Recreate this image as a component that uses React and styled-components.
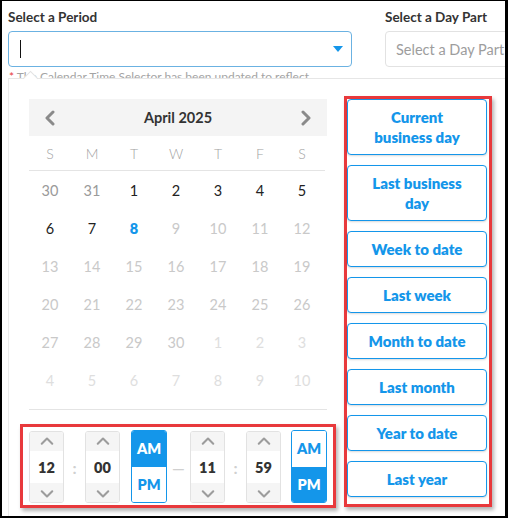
import React from 'react'
import styled, { createGlobalStyle } from 'styled-components'

const GlobalStyle = createGlobalStyle`
  html, body {
    margin: 0;
    padding: 0;
    background: #fff;
  }
  body {
    font-family: 'Lato', 'Open Sans', sans-serif;
  }
`

const BLUE = '#1496ea'
const RED = '#e8393c'

const weekdays = ['S', 'M', 'T', 'W', 'T', 'F', 'S']

const days = [
  [['30', 'prev'], ['31', 'prev'], ['1', 'on'], ['2', 'on'], ['3', 'on'], ['4', 'on'], ['5', 'on']],
  [['6', 'on'], ['7', 'on'], ['8', 'today'], ['9', 'off'], ['10', 'off'], ['11', 'off'], ['12', 'off']],
  [['13', 'off'], ['14', 'off'], ['15', 'off'], ['16', 'off'], ['17', 'off'], ['18', 'off'], ['19', 'off']],
  [['20', 'off'], ['21', 'off'], ['22', 'off'], ['23', 'off'], ['24', 'off'], ['25', 'off'], ['26', 'off']],
  [['27', 'off'], ['28', 'off'], ['29', 'off'], ['30', 'off'], ['1', 'next'], ['2', 'next'], ['3', 'next']],
  [['4', 'next'], ['5', 'next'], ['6', 'next'], ['7', 'next'], ['8', 'next'], ['9', 'next'], ['10', 'next']],
]

const dayColors = {
  prev: '#9a9a9a',
  on: '#222',
  today: BLUE,
  off: '#c9c9c9',
  next: '#dedede',
}

// line breaks follow the narrow button width of the original
const presets = [
  'Current\nbusiness day',
  'Last business\nday',
  'Week to date',
  'Last week',
  'Month to date',
  'Last month',
  'Year to date',
  'Last year',
]

const Chevron = ({ dir = 'left', size = 16, color = '#8a8a8a', width = 3 }) => {
  const paths = {
    left: 'M10 2 L4 8 L10 14',
    right: 'M6 2 L12 8 L6 14',
    up: 'M2 10 L8 4 L14 10',
    down: 'M2 6 L8 12 L14 6',
  }
  return (
    <svg width={size} height={size} viewBox="0 0 16 16" fill="none">
      <path d={paths[dir]} stroke={color} strokeWidth={width} strokeLinecap="round" strokeLinejoin="round" />
    </svg>
  )
}

const App = () => {
  return (
    <>
      <GlobalStyle />
      <Frame>
        <TopRow>
          <Field>
            <Label>Select a Period</Label>
            <PeriodInput>
              <Cursor />
              <svg width="10" height="6" viewBox="0 0 10 6">
                <path d="M0 0 L10 0 L5 6 Z" fill={BLUE} />
              </svg>
            </PeriodInput>
          </Field>
          <Field>
            <Label>Select a Day Part</Label>
            <DayPartInput>Select a Day Part</DayPartInput>
          </Field>
        </TopRow>
        <Hint>
          <Star>*</Star> The Calendar Time Selector has been updated to reflect
        </Hint>

        <Popup>
          <Notch />
          <CalendarCol>
            <MonthBar>
              <NavBtn><Chevron dir="left" /></NavBtn>
              <MonthTitle>April 2025</MonthTitle>
              <NavBtn><Chevron dir="right" /></NavBtn>
            </MonthBar>
            <WeekRow>
              {weekdays.map((d, i) => (
                <WeekDay key={i}>{d}</WeekDay>
              ))}
            </WeekRow>
            <DayGrid>
              {days.flat().map(([n, kind], i) => (
                <Day key={i} $kind={kind}>{n}</Day>
              ))}
            </DayGrid>
            <Divider />
            <TimeBox>
              <Spinner value="12" />
              <Sep $w={21}>:</Sep>
              <Spinner value="00" />
              <Gap $w={11} />
              <Meridiem am />
              <Sep $w={23}>—</Sep>
              <Spinner value="11" />
              <Sep $w={21}>:</Sep>
              <Spinner value="59" />
              <Gap $w={10} />
              <Meridiem />
            </TimeBox>
          </CalendarCol>

          <PresetBox>
            {presets.map((p) => (
              <PresetButton key={p}>{p}</PresetButton>
            ))}
          </PresetBox>
        </Popup>
      </Frame>
    </>
  )
}

const Spinner = ({ value }) => (
  <SpinnerWrap>
    <SpinArrow><Chevron dir="up" size={14} color="#9c9c9c" width={2.4} /></SpinArrow>
    <SpinValue>{value}</SpinValue>
    <SpinArrow><Chevron dir="down" size={14} color="#9c9c9c" width={2.4} /></SpinArrow>
  </SpinnerWrap>
)

const Meridiem = ({ am }) => (
  <MeridiemWrap>
    <MeridiemHalf $active={am}>AM</MeridiemHalf>
    <MeridiemHalf $active={!am}>PM</MeridiemHalf>
  </MeridiemWrap>
)

export default App

const Frame = styled.div`
  position: relative;
  box-sizing: border-box;
  width: 508px;
  height: 518px;
  overflow: hidden;
  border-style: solid;
  border-color: #000;
  border-width: 1px 3px 2px 2px;
  padding: 7px 0 0 6px;
  background: #fff;
`

const TopRow = styled.div`
  display: flex;
  gap: 33px;
  width: 700px;
`

const Field = styled.div`
  display: flex;
  flex-direction: column;
`

const Label = styled.div`
  font-size: 13.5px;
  font-weight: 700;
  color: #333;
  line-height: 18px;
  height: 18px;
  margin-bottom: 5px;
`

const PeriodInput = styled.div`
  box-sizing: border-box;
  width: 344px;
  height: 36px;
  border: 1px solid #6bb2e2;
  border-radius: 4px;
  display: flex;
  align-items: center;
  justify-content: space-between;
  padding: 0 8px 0 11px;
`

const Cursor = styled.span`
  width: 1px;
  height: 18px;
  background: #111;
`

const DayPartInput = styled.div`
  box-sizing: border-box;
  width: 200px;
  height: 36px;
  border: 1px solid #e2e2e2;
  border-radius: 4px;
  display: flex;
  align-items: center;
  padding-left: 10px;
  font-size: 14.5px;
  color: #9d9d9d;
`

const Hint = styled.div`
  margin-top: 3px;
  font-size: 12px;
  line-height: 14px;
  color: #a4a4a4;
  padding-left: 1px;
`

const Star = styled.span`
  color: ${RED};
`

const Popup = styled.div`
  position: absolute;
  top: 77px;
  left: 6px;
  right: 0;
  bottom: 0;
  box-sizing: border-box;
  background: #fff;
  border-top: 1px solid #e6e6e6;
  border-left: 1px solid #ececec;
  display: flex;
  align-items: flex-start;
  gap: 17px;
  padding: 20px 0 0 20px;
`

const Notch = styled.div`
  position: absolute;
  top: -6px;
  left: 16px;
  width: 10px;
  height: 10px;
  background: #fff;
  border-top: 1px solid #e2e2e2;
  border-left: 1px solid #e2e2e2;
  transform: rotate(45deg);
`

const CalendarCol = styled.div`
  width: 298px;
  display: flex;
  flex-direction: column;
`

const MonthBar = styled.div`
  height: 37px;
  background: #f4f4f4;
  display: flex;
  align-items: center;
  justify-content: space-between;
  padding: 0 14px;
`

const NavBtn = styled.span`
  display: flex;
  align-items: center;
`

const MonthTitle = styled.div`
  font-size: 14.5px;
  font-weight: 700;
  color: #333;
`

const WeekRow = styled.div`
  display: grid;
  grid-template-columns: repeat(7, 42px);
  height: 34px;
  align-items: center;
  border-bottom: 1px solid #e4e4e4;
  margin-right: 2px;
`

const WeekDay = styled.div`
  text-align: center;
  font-size: 14px;
  color: #a2a2a2;
  font-weight: 300;
`

const DayGrid = styled.div`
  display: grid;
  grid-template-columns: repeat(7, 42px);
  grid-auto-rows: 38px;
  align-items: center;
`

const Day = styled.div`
  text-align: center;
  font-size: 14.5px;
  font-weight: ${(p) => (p.$kind === 'today' ? 800 : 400)};
  color: ${(p) => dayColors[p.$kind]};
`

const Divider = styled.div`
  height: 1px;
  background: #e4e4e4;
  margin-top: 10px;
`

const TimeBox = styled.div`
  margin: 14px -9px 0 -9px;
  border: 3px solid ${RED};
  box-shadow: 2px 3px 4px rgba(0, 0, 0, 0.3);
  padding: 4px 6px 2px 6px;
  display: flex;
  align-items: stretch;
`

const SpinnerWrap = styled.div`
  box-sizing: border-box;
  width: 35px;
  height: 72px;
  border: 1px solid #e2e2e2;
  border-radius: 3px;
  display: flex;
  flex-direction: column;
  overflow: hidden;
`

const SpinArrow = styled.div`
  height: 19px;
  background: #f5f5f5;
  display: flex;
  align-items: center;
  justify-content: center;
`

const SpinValue = styled.div`
  flex: 1;
  display: flex;
  align-items: center;
  justify-content: center;
  font-size: 14.5px;
  font-weight: 800;
  color: #333;
  background: #fff;
`

const Sep = styled.div`
  width: ${(p) => p.$w}px;
  display: flex;
  align-items: center;
  justify-content: center;
  font-size: 16px;
  font-weight: 700;
  color: #d0d0d0;
`

const Gap = styled.div`
  width: ${(p) => p.$w}px;
`

const MeridiemWrap = styled.div`
  box-sizing: border-box;
  width: 36px;
  height: 73px;
  margin-top: -1px;
  border: 1px solid ${BLUE};
  border-radius: 3px;
  display: flex;
  flex-direction: column;
  overflow: hidden;
`

const MeridiemHalf = styled.div`
  flex: 1;
  display: flex;
  align-items: center;
  justify-content: center;
  font-size: 14.5px;
  font-weight: 800;
  background: ${(p) => (p.$active ? BLUE : '#fff')};
  color: ${(p) => (p.$active ? '#fff' : BLUE)};
`

const PresetBox = styled.div`
  margin-top: -3px;
  width: 141px;
  border: 3px solid ${RED};
  box-shadow: 2px 3px 4px rgba(0, 0, 0, 0.3);
  padding: 0 1px 7px 0;
  display: flex;
  flex-direction: column;
  gap: 10px;
`

const PresetButton = styled.button`
  box-sizing: border-box;
  width: 140px;
  padding: 7px 10px;
  background: #fff;
  border: 1px solid ${BLUE};
  border-radius: 4px;
  box-shadow: 0 1px 2px rgba(0, 0, 0, 0.15);
  font-family: 'Lato', 'Open Sans', sans-serif;
  font-size: 15px;
  font-weight: 800;
  line-height: 20px;
  color: ${BLUE};
  text-align: center;
  white-space: pre-line;
`
